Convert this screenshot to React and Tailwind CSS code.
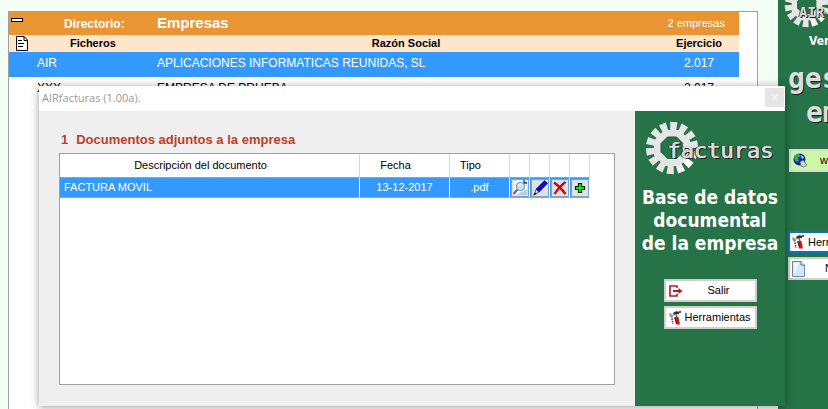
import React, { useState } from 'react';

const empresas = [
  { id: 'AIR', nombre: 'APLICACIONES INFORMATICAS REUNIDAS, SL', ejercicio: '2.017' },
  { id: 'XXX', nombre: 'EMPRESA DE PRUEBA', ejercicio: '2.017' }
];

const documentos = [
  { id: 1, descripcion: 'FACTURA MOVIL', fecha: '13-12-2017', tipo: '.pdf' }
];

// 14 teeth, the two at the lower right are brighter
const teeth = Array.from({ length: 14 }, (_, i) => 4 + (i * 360) / 14);

function Gear({ className }) {
  return (
    <svg className={className} viewBox="0 0 54 54" aria-hidden="true">
      {teeth.map((angle, i) => (
        <path
          key={angle}
          d="M24.3 12 L23.3 1 H30.7 L29.7 12 Z"
          fill={i === 5 || i === 6 ? '#ffffff' : '#e6e6e6'}
          transform={`rotate(${angle} 27 27)`}
        />
      ))}
      <path
        d="M19.5 9 H34.5 L45 19.5 V34.5 L34.5 45 H19.5 L9 34.5 V19.5 Z M22.5 16 L16 22.5 V31.5 L22.5 38 H31.5 L38 31.5 V22.5 L31.5 16 Z"
        fill="#e6e6e6"
        fillRule="evenodd"
      />
      <path d="M16 31.5 V22.5 L22.5 16 H31.5 L38 22.5" fill="none" stroke="#1a5232" strokeWidth="1" />
    </svg>
  );
}

function PageIcon() {
  return (
    <svg className="h-[15px] w-3" viewBox="0 0 12 15" aria-hidden="true">
      <path d="M.5 .5 H8 L11.5 4 V14.5 H.5 Z" fill="#fff" stroke="#000" />
      <path d="M8 .5 V4.5 H11.5 M2 4.5 H6 M2 7.5 H8 M2 10.5 H7" fill="none" stroke="#000" />
    </svg>
  );
}

function ToolsIcon() {
  return (
    <svg className="h-[14px] w-3 shrink-0" viewBox="0 0 12 14" aria-hidden="true">
      <path d="M2.5 5 L4 13" stroke="#444" strokeWidth="1.6" strokeDasharray="1.5 1" />
      <path d="M0 3 L2 2 L3 4 L5 3 L4 6 H1 Z" fill="#8b97a3" />
      <path d="M4 2 Q7 -1 10 1 V3 L7 3 L5 4 Z" fill="#333" />
      <path d="M7 3 L8 7" stroke="#666" strokeWidth="1.5" />
      <path d="M5 6 H9.5 L11 13.5 H7 Z" fill="#cc1820" />
      <path d="M6 7 L8 12" stroke="#771018" />
      <path d="M10 0 H12 V2 H10 Z" fill="#555" />
    </svg>
  );
}

function ExitIcon() {
  return (
    <svg className="h-3 w-[14px] shrink-0" viewBox="0 0 14 12" aria-hidden="true">
      <path d="M8 3 V1 H1 V11 H8 V9" fill="none" stroke="#b01c20" strokeWidth="1.6" />
      <path d="M4 6 H11" stroke="#b01c20" strokeWidth="2" />
      <path d="M9.5 3 L13.5 6 L9.5 9 Z" fill="#b01c20" />
    </svg>
  );
}

function GlobeIcon() {
  return (
    <svg className="h-[15px] w-[15px] shrink-0" viewBox="0 0 15 15" aria-hidden="true">
      <circle cx="6.5" cy="6.5" r="6" fill="#15249c" />
      <path d="M1 5 Q2 1 6 1 L8 3 L5 5 L6 8 L3 9 Z" fill="#3aa557" />
      <path d="M8 2 L11 4 L10 6 L8 5 Z" fill="#7cc8ee" />
      <path d="M7 9 L10 7 L14 12 L11 14 L8 13 Z" fill="#c9d6dc" stroke="#48616b" strokeWidth=".7" />
    </svg>
  );
}

function SheetIcon() {
  return (
    <svg className="h-4 w-[13px] shrink-0" viewBox="0 0 13 16" aria-hidden="true">
      <path d="M.5 .5 H9 L12.5 4 V15.5 H.5 Z" fill="#d4e6fa" stroke="#6c89b4" />
      <path d="M2 2 H7 L3 12 H2 Z" fill="#f4f9ff" />
      <path d="M9 .5 V4 H12.5" fill="#fff" stroke="#4a6694" />
    </svg>
  );
}

function ViewIcon() {
  return (
    <svg className="block h-4 w-4" viewBox="0 0 16 16" aria-hidden="true">
      <path d="M2 0 H13 L15 3 V15 H2 Z" fill="#eef6ff" />
      <path d="M4 15 H15 V9 Z" fill="#b9cfe6" />
      <path d="M12 0 V3 H15" fill="none" stroke="#1d3450" strokeWidth="1.3" />
      <path d="M5.5 9.5 L1.5 14" stroke="#a8513f" strokeWidth="2" />
      <circle cx="8.5" cy="6.5" r="4" fill="#bfe4fa" stroke="#8299b0" strokeWidth="1.2" />
      <path d="M6.5 6 Q7 4 9 4.2" stroke="#fff" strokeWidth="1.2" fill="none" />
    </svg>
  );
}

function EditIcon() {
  return (
    <svg className="block h-4 w-4" viewBox="0 0 16 16" aria-hidden="true">
      <path d="M12.5 .8 L15.5 3.2 L7 12 L4 9.2 Z" fill="#0808e0" stroke="#00006c" strokeWidth=".8" />
      <path d="M4 9.2 L7 12 L2.5 14.5 Z" fill="#d8d8d8" stroke="#222" strokeWidth=".7" />
      <path d="M1 15.5 L3 12.5 L4.5 14 Z" fill="#000" />
    </svg>
  );
}

function DeleteIcon() {
  return (
    <svg className="block h-4 w-4" viewBox="0 0 16 16" aria-hidden="true">
      <path d="M2 2.5 Q8 6.5 13.5 14 M13.5 2 Q8 6 2.5 14" fill="none" stroke="#c00a12" strokeWidth="2.2" />
    </svg>
  );
}

function AddIcon() {
  return (
    <svg className="block h-4 w-4" viewBox="0 0 16 16" aria-hidden="true">
      <path d="M6.5 3.5 H9.5 V6.5 H12.5 V9.5 H9.5 V12.5 H6.5 V9.5 H3.5 V6.5 H6.5 Z" fill="#18e818" stroke="#062c06" strokeWidth="1.2" />
    </svg>
  );
}

const acciones = [
  { label: 'Ver', Icon: ViewIcon },
  { label: 'Modificar', Icon: EditIcon },
  { label: 'Borrar', Icon: DeleteIcon },
  { label: 'Añadir', Icon: AddIcon }
];

function Directorio() {
  return (
    <main className="mt-[11px] ml-2 min-w-0 flex-1 border border-b-0 border-[#a0a0a0] bg-white pr-[18px]">
      <div className="flex h-[23px] items-center bg-[#e99533] text-white">
        <button className="mb-2 ml-0.5 h-1 w-3 border border-black bg-white" aria-label="Contraer"></button>
        <span className="ml-[41px] w-[93px] text-xs font-bold">Directorio:</span>
        <h1 className="flex-1 text-[15px] font-bold">Empresas</h1>
        <span className="pr-[14px] text-[11px]">2 empresas</span>
      </div>
      <table className="w-full table-fixed border-collapse text-xs">
        <thead className="bg-[#ffe5c9] text-[11px]">
          <tr className="h-[17px]">
            <th className="w-[148px] p-0">
              <div className="flex items-center">
                <span className="ml-[7px] w-[54px]"><PageIcon /></span>
                Ficheros
              </div>
            </th>
            <th className="p-0 pr-1 text-center">Razón Social</th>
            <th className="w-20 p-0 text-center">Ejercicio</th>
          </tr>
        </thead>
        <tbody>
          {empresas.map((empresa, index) => (
            <tr key={empresa.id} className={index === 0 ? 'h-[25px] bg-[#3399ff] text-white' : 'h-[25px] text-black'}>
              <td className="p-0 pb-1 pl-7">{empresa.id}</td>
              <td className="p-0 pb-1">{empresa.nombre}</td>
              <td className="p-0 pb-1 text-center">{empresa.ejercicio}</td>
            </tr>
          ))}
        </tbody>
      </table>
    </main>
  );
}

function Lateral() {
  return (
    <aside className="ml-5 w-[50px] shrink-0 overflow-hidden bg-[#257346]">
      <div className="w-[150px]">
        <div className="relative h-[27px]">
          <Gear className="absolute -top-[18px] left-1.5 h-[46px] w-[46px]" />
          <span className="absolute top-0.5 left-[21px] font-['DejaVu_Sans_Mono'] text-sm font-bold text-[#d8d8d8] [text-shadow:1px_1px_0_#222,-1px_0_0_#555]">AIR-</span>
        </div>
        <p className="mt-1.5 pl-[31px] font-['DejaVu_Sans_Condensed','DejaVu_Sans',sans-serif] text-xs leading-4 font-bold text-white">Versión</p>
        <p className="mt-3 pl-2.5 font-['DejaVu_Sans_Mono'] text-[28px] leading-9 font-bold text-[#dedede] [text-shadow:1px_1px_0_#222]">gestión</p>
        <p className="pl-7 font-['DejaVu_Sans_Mono'] text-[28px] leading-8 font-bold text-[#dedede] [text-shadow:1px_1px_0_#222]">empresas</p>
        <div className="mt-5 flex flex-col pl-2.5">
          <button className="mb-[59px] ml-px flex h-[23px] w-[118px] items-center gap-3 border-2 border-[#d6dccb] bg-[#cdf7a5] pl-0.5 text-[11px]">
            <GlobeIcon />
            www
          </button>
          <button className="mb-1 flex h-[22px] w-[118px] items-center gap-1 border-2 border-[#0a70cc] bg-white pl-0.5 text-[11px]">
            <ToolsIcon />
            Herramientas
          </button>
          <button className="flex h-[23px] w-[118px] items-center gap-5 border-2 border-[#d0d0c8] bg-white pl-0.5 text-[11px]">
            <SheetIcon />
            Nuevo
          </button>
        </div>
      </div>
    </aside>
  );
}

function Documentos({ onClose }) {
  return (
    <div role="dialog" aria-labelledby="titulo" className="absolute top-[86px] right-[43px] bottom-[3px] left-[39px] flex flex-col bg-[#efefef] shadow-[0_1px_8px_rgba(0,0,0,0.4)]">
      <div className="flex h-[25px] shrink-0 items-start justify-between bg-white">
        <h2 id="titulo" className="pl-[3px] font-['Open_Sans','Noto_Sans',sans-serif] text-[11px] leading-6 text-[#999]">AIRfacturas (1.00a).</h2>
        <button onClick={onClose} aria-label="Cerrar" className="mt-0.5 mr-px h-[19px] w-[19px] bg-[#e5e5e5] text-xs leading-4 text-[#f4f4f4]">×</button>
      </div>
      <div className="flex min-h-0 flex-1">
        <section className="flex min-w-0 flex-1 flex-col px-5 pt-5 pb-[21px]">
          <h3 className="mb-1 pl-0.5 text-[13px] leading-[18px] font-bold text-[#b9402c]">
            <span className="mr-2">1</span>
            Documentos adjuntos a la empresa
          </h3>
          <div className="flex-1 border border-[#a0a0a0] bg-white pr-6">
            <table className="w-full table-fixed border-separate border-spacing-0 text-[11px]">
              <thead>
                <tr className="h-6">
                  <th className="border-r border-b border-r-[#d8d8d8] border-b-[#a0a0a0] p-0 pr-[18px] font-normal">Descripción del documento</th>
                  <th className="w-[90px] border-r border-b border-r-[#d8d8d8] border-b-[#a0a0a0] p-0 pr-[18px] font-normal">Fecha</th>
                  <th className="w-[60px] border-r border-b border-r-[#d8d8d8] border-b-[#a0a0a0] p-0 pr-[18px] font-normal">Tipo</th>
                  {acciones.map(({ label }) => (
                    <th key={label} aria-label={label} className="w-5 border-r border-b border-r-[#d8d8d8] border-b-[#a0a0a0] p-0"></th>
                  ))}
                </tr>
              </thead>
              <tbody>
                {documentos.map((doc) => (
                  <tr key={doc.id} className="h-5 bg-[#3399ff] text-white">
                    <td className="border-r border-b border-r-white border-b-[#a0a0a0] p-0 pl-1">{doc.descripcion}</td>
                    <td className="border-r border-b border-r-white border-b-[#a0a0a0] p-0 text-center">{doc.fecha}</td>
                    <td className="border-r border-b border-r-white border-b-[#a0a0a0] p-0 text-center">{doc.tipo}</td>
                    {acciones.map(({ label, Icon }) => (
                      <td key={label} className="border-r border-b border-r-white border-b-[#a0a0a0] p-0">
                        <button aria-label={label} className="mx-auto block h-[18px] w-[18px] border border-[#7fa3c8] bg-[#dfe1e4]">
                          <Icon />
                        </button>
                      </td>
                    ))}
                  </tr>
                ))}
              </tbody>
            </table>
          </div>
        </section>
        <aside className="flex w-[150px] shrink-0 flex-col items-center bg-[#257346]">
          <div className="relative h-[75px] w-full">
            <Gear className="absolute top-2.5 left-2.5 h-[54px] w-[54px]" />
            <span className="absolute top-[26px] left-8 font-['DejaVu_Sans_Mono'] text-[22px] leading-7 text-[#dcdcdc] [text-shadow:1px_0_0_#ccc,2px_1px_0_#222,-1px_0_0_#333]">facturas</span>
          </div>
          <p className="text-center font-['DejaVu_Sans_Condensed','DejaVu_Sans',sans-serif] text-[19px] leading-[23px] font-bold whitespace-nowrap text-white">
            Base de datos
            <br />
            documental
            <br />
            de la empresa
          </p>
          <div className="mt-6 flex flex-col gap-1">
            <button onClick={onClose} className="flex h-[23px] w-[93px] items-center border-2 border-[#d0d0c8] bg-white pl-[3px] text-[11px]">
              <ExitIcon />
              <span className="flex-1 text-center">Salir</span>
            </button>
            <button className="flex h-[23px] w-[93px] items-center border-2 border-[#d0d0c8] bg-white pl-[3px] text-[11px]">
              <ToolsIcon />
              <span className="flex-1 text-center">Herramientas</span>
            </button>
          </div>
        </aside>
      </div>
    </div>
  );
}

function App() {
  const [abierto, setAbierto] = useState(true);

  return (
    <div className="relative flex h-screen overflow-hidden bg-[#f3fff5] font-['Liberation_Sans',Arial,sans-serif]">
      <Directorio />
      <Lateral />
      {abierto && <Documentos onClose={() => setAbierto(false)} />}
    </div>
  );
}

export default App;
